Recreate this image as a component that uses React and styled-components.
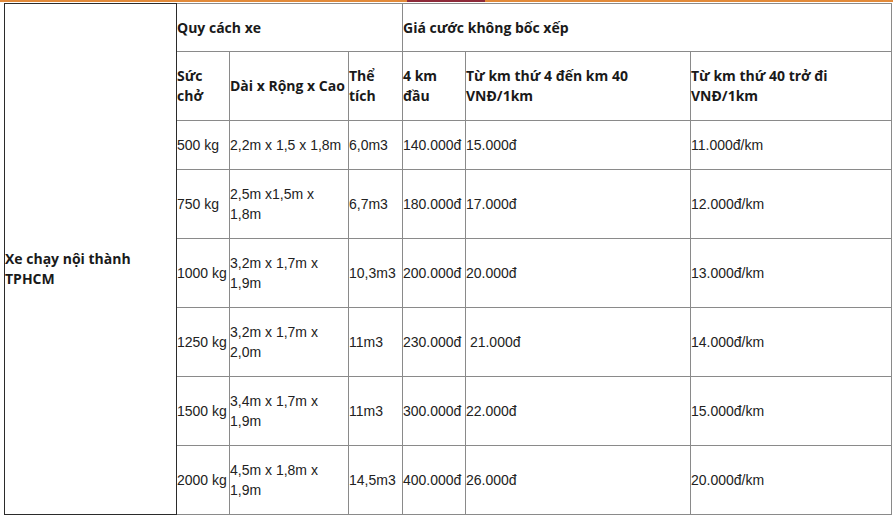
import React from "react";
import styled, { createGlobalStyle } from "styled-components";

const Global = createGlobalStyle`
  html, body { margin: 0; padding: 0; background: #fff; }
  body { font-family: "Liberation Sans", Arial, sans-serif; color: #111; }
`;

const TopBar = styled.div`
  height: 2px;
  margin-bottom: 1px;
  background: linear-gradient(
    to right,
    #e28a3a 0,
    #e28a3a 407px,
    #8e2a3a 407px,
    #8e2a3a 485px,
    #e28a3a 485px
  );
`;

const Table = styled.table`
  margin-left: 4px;
  width: 887px;
  table-layout: fixed;
  border-collapse: collapse;
  border: 1px solid #2b2b2b;
  font-size: 14px;
  line-height: 20px;
`;

const Row = styled.tr`
  height: ${(p) => p.$h}px;
`;

const Cell = styled.td`
  padding: 0;
  border: 1px solid #8a8a8a;
  vertical-align: middle;
  text-align: left;
  font-family: ${(p) =>
    p.$bold ? '"Open Sans", "Noto Sans", sans-serif' : '"Liberation Sans", Arial, sans-serif'};
  font-weight: ${(p) => (p.$bold ? 700 : 400)};
  color: ${(p) => (p.$bold ? "#1a1a1a" : "#222")};
  word-wrap: break-word;
`;

const SideCell = styled(Cell)`
  border-color: #2b2b2b;
  padding-top: 19px;
`;

const widths = [172, 53, 119, 54, 63, 225, 201];

const rows = [
  ["500 kg", "2,2m x 1,5 x 1,8m", "6,0m3", "140.000đ", "15.000đ", "11.000đ/km", 49],
  ["750 kg", ["2,5m x1,5m x", "1,8m"], "6,7m3", "180.000đ", "17.000đ", "12.000đ/km", 69],
  ["1000 kg", ["3,2m x 1,7m x", "1,9m"], "10,3m3", "200.000đ", "20.000đ", "13.000đ/km", 69],
  ["1250 kg", ["3,2m x 1,7m x", "2,0m"], "11m3", "230.000đ", "\u00a021.000đ", "14.000đ/km", 69],
  ["1500 kg", ["3,4m x 1,7m x", "1,9m"], "11m3", "300.000đ", "22.000đ", "15.000đ/km", 69],
  ["2000 kg", ["4,5m x 1,8m x", "1,9m"], "14,5m3", "400.000đ", "26.000đ", "20.000đ/km", 69],
];

const Lines = ({ v }) =>
  Array.isArray(v)
    ? v.map((t, i) => (
        <React.Fragment key={i}>
          {i > 0 && <br />}
          {t}
        </React.Fragment>
      ))
    : v;

export default function App() {
  return (
    <>
      <Global />
      <TopBar />
      <Table>
        <colgroup>
          {widths.map((w, i) => (
            <col key={i} style={{ width: w }} />
          ))}
        </colgroup>
        <tbody>
          <Row $h={48}>
            <SideCell $bold rowSpan={8}>
              Xe chạy nội thành
              <br />
              TPHCM
            </SideCell>
            <Cell $bold colSpan={3}>Quy cách xe</Cell>
            <Cell $bold colSpan={3}>Giá cước không bốc xếp</Cell>
          </Row>
          <Row $h={69}>
            <Cell $bold>
              Sức
              <br />
              chở
            </Cell>
            <Cell $bold>Dài x Rộng x Cao</Cell>
            <Cell $bold>
              Thể
              <br />
              tích
            </Cell>
            <Cell $bold>
              4 km
              <br />
              đầu
            </Cell>
            <Cell $bold>
              Từ km thứ 4 đến km 40
              <br />
              VNĐ/1km
            </Cell>
            <Cell $bold>
              Từ km thứ 40 trở đi
              <br />
              VNĐ/1km
            </Cell>
          </Row>
          {rows.map((r, i) => (
            <Row key={i} $h={r[6]}>
              {r.slice(0, 6).map((v, j) => (
                <Cell key={j}>
                  <Lines v={v} />
                </Cell>
              ))}
            </Row>
          ))}
        </tbody>
      </Table>
    </>
  );
}
